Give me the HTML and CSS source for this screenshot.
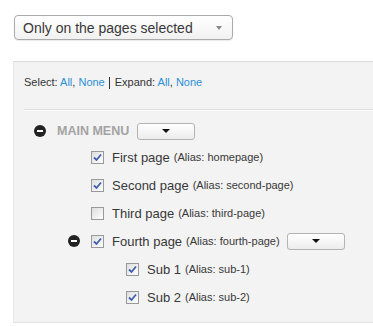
FILE: index.html
```html
<!DOCTYPE html>
<html>
<head>
    <link rel="stylesheet" href="styles.css">
</head>
<body>
    <div class="page">
        <div class="select">
            <span>Only on the pages selected</span>
            <span class="caret"></span>
        </div>

        <div class="panel">
            <div class="toolbar">
                Select: <a href="#">All</a>, <a href="#">None</a><span class="sep"></span>Expand: <a href="#">All</a>, <a href="#">None</a>
            </div>

            <ul class="tree">
                <li>
                    <div class="row main">
                        <span class="toggle"></span>
                        <span class="menu-title">MAIN MENU</span>
                        <span class="drop"></span>
                    </div>
                    <ul>
                        <li>
                            <div class="row">
                                <span class="toggle none"></span>
                                <span class="check on"><svg viewBox="0 0 9 9"><path d="M1 4.5 L3.5 7 L8 1.5" /></svg></span>
                                <span class="label">First page</span>
                                <span class="alias">(Alias: homepage)</span>
                            </div>
                        </li>
                        <li>
                            <div class="row">
                                <span class="toggle none"></span>
                                <span class="check on"><svg viewBox="0 0 9 9"><path d="M1 4.5 L3.5 7 L8 1.5" /></svg></span>
                                <span class="label">Second page</span>
                                <span class="alias">(Alias: second-page)</span>
                            </div>
                        </li>
                        <li>
                            <div class="row">
                                <span class="toggle none"></span>
                                <span class="check"></span>
                                <span class="label">Third page</span>
                                <span class="alias">(Alias: third-page)</span>
                            </div>
                        </li>
                        <li>
                            <div class="row">
                                <span class="toggle"></span>
                                <span class="check on"><svg viewBox="0 0 9 9"><path d="M1 4.5 L3.5 7 L8 1.5" /></svg></span>
                                <span class="label">Fourth page</span>
                                <span class="alias">(Alias: fourth-page)</span>
                                <span class="drop"></span>
                            </div>
                            <ul>
                                <li>
                                    <div class="row">
                                        <span class="toggle none"></span>
                                        <span class="check on"><svg viewBox="0 0 9 9"><path d="M1 4.5 L3.5 7 L8 1.5" /></svg></span>
                                        <span class="label">Sub 1</span>
                                        <span class="alias">(Alias: sub-1)</span>
                                    </div>
                                </li>
                                <li>
                                    <div class="row">
                                        <span class="toggle none"></span>
                                        <span class="check on"><svg viewBox="0 0 9 9"><path d="M1 4.5 L3.5 7 L8 1.5" /></svg></span>
                                        <span class="label">Sub 2</span>
                                        <span class="alias">(Alias: sub-2)</span>
                                    </div>
                                </li>
                            </ul>
                        </li>
                    </ul>
                </li>
            </ul>
        </div>
    </div>
</body>
</html>
```

FILE: styles.css
```css
body {
    margin: 0;
    background-color: #fff;
    font-family: "Liberation Sans", Arial, sans-serif;
    color: #333;
}

.page {
    padding-top: 15px;
}

.select {
    margin-left: 14px;
    height: 23px;
    border: 1px solid #aaa;
    border-radius: 4px;
    background: linear-gradient(#fff, #f1f1f1);
    box-shadow: 0 1px 1px rgba(0, 0, 0, 0.08);
    display: flex;
    align-items: center;
    justify-content: space-between;
    padding: 0 10px 0 8px;
    width: 199px;
    font-size: 14px;
    color: #383838;
}

.caret {
    width: 0;
    height: 0;
    border-left: 3px solid transparent;
    border-right: 3px solid transparent;
    border-top: 4px solid #888;
}

.panel {
    margin-top: 21px;
    margin-left: 13px;
    background-color: #f3f3f3;
    border-top: 1px solid #dcdcdc;
    border-left: 1px solid #e6e6e6;
    border-bottom: 1px solid #e2e2e2;
    padding-bottom: 11px;
}

.toolbar {
    margin-left: 10px;
    padding: 14px 0 20px;
    line-height: 13px;
    font-size: 11px;
    color: #333;
    border-bottom: 1px solid #dedede;
    box-shadow: 0 1px 0 #fff;
}

.toolbar a {
    color: #2b8fd6;
    text-decoration: none;
}

.sep {
    display: inline-block;
    width: 1px;
    height: 12px;
    background-color: #333;
    margin: 0 5px 0 4px;
    vertical-align: -3px;
}

.tree {
    list-style: none;
    margin: 0;
    padding: 9px 0 0 20px;
}

.tree ul {
    list-style: none;
    margin: 0;
    padding-left: 34px;
}

.tree ul ul {
    padding-left: 35px;
}

.row {
    display: flex;
    align-items: center;
    height: 28px;
}

.row.main {
    height: 24px;
}

.toggle {
    width: 12px;
    height: 12px;
    border-radius: 50%;
    background-color: #222;
    margin-right: 11px;
    display: flex;
    align-items: center;
    justify-content: center;
}

.toggle::after {
    content: "";
    width: 6px;
    height: 2px;
    background-color: #fff;
}

.toggle.none {
    background: none;
}

.toggle.none::after {
    display: none;
}

.menu-title {
    font-size: 12.5px;
    font-weight: bold;
    color: #a3a3a3;
}

.drop {
    width: 56px;
    height: 15px;
    margin-left: 8px;
    border: 1px solid #b3b3b3;
    border-radius: 3px;
    background: linear-gradient(#fff, #ececec);
    display: flex;
    align-items: center;
    justify-content: center;
}

.drop::after {
    content: "";
    width: 0;
    height: 0;
    border-left: 4px solid transparent;
    border-right: 4px solid transparent;
    border-top: 4px solid #111;
}

.check {
    width: 11px;
    height: 11px;
    border: 1px solid #999;
    background: linear-gradient(135deg, #dedede, #fff);
    margin-right: 8px;
    display: flex;
    align-items: center;
    justify-content: center;
}

.check svg {
    width: 9px;
    height: 9px;
    fill: none;
    stroke: #3f5fb0;
    stroke-width: 1.8;
}

.label {
    font-size: 13px;
    color: #383838;
    margin-right: 4px;
}

.alias {
    font-size: 11px;
    color: #383838;
}

.row .alias + .drop {
    margin-left: 7px;
}
```
